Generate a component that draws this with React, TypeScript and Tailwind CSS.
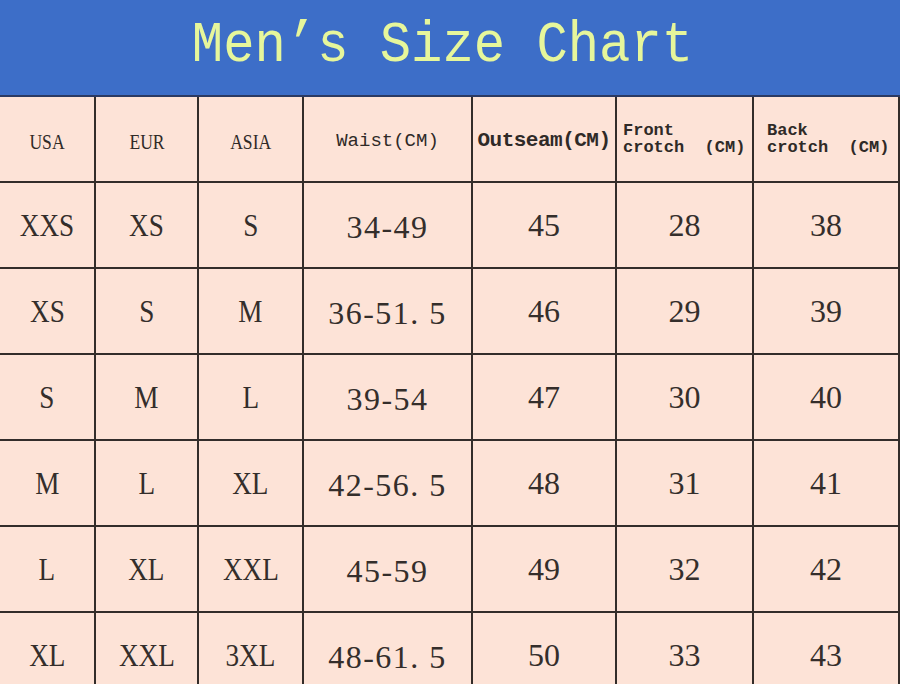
const columns = ["w-[96px]", "w-[103px]", "w-[105px]", "w-[169px]", "w-[144px]", "w-[137px]", "w-[146px]"];

const rows = [
  ["XXS", "XS", "S", "34-49", "45", "28", "38"],
  ["XS", "S", "M", "36-51.5", "46", "29", "39"],
  ["S", "M", "L", "39-54", "47", "30", "40"],
  ["M", "L", "XL", "42-56.5", "48", "31", "41"],
  ["L", "XL", "XXL", "45-59", "49", "32", "42"],
  ["XL", "XXL", "3XL", "48-61.5", "50", "33", "43"],
];

const cell = "shrink-0 h-full border-r-2 border-[#332d2a] flex items-center justify-center";

function HeaderRow() {
  const mono = { fontFamily: '"Liberation Mono", "DejaVu Sans Mono", monospace' };
  return (
    <div className="flex h-[86px] shrink-0 border-b-2 border-[#332d2a] text-[#2f2a27]">
      <div className={`${cell} ${columns[0]} text-[22px] pt-1`}>
        <span className="inline-block scale-x-[0.8]">USA</span>
      </div>
      <div className={`${cell} ${columns[1]} text-[22px] pt-1`}>
        <span className="inline-block scale-x-[0.8]">EUR</span>
      </div>
      <div className={`${cell} ${columns[2]} text-[22px] pt-1`}>
        <span className="inline-block scale-x-[0.8]">ASIA</span>
      </div>
      <div className={`${cell} ${columns[3]} text-[19px] pt-1`} style={mono}>
        Waist(CM)
      </div>
      <div className={`${cell} ${columns[4]} text-[21px] font-bold tracking-[-0.5px] pt-1`} style={mono}>
        Outseam(CM)
      </div>
      <div className={`${cell} ${columns[5]} justify-start! pl-[6px] text-[17px] leading-[17px] font-bold`} style={mono}>
        <div className="whitespace-pre">{"Front\ncrotch  (CM)"}</div>
      </div>
      <div className={`${cell} ${columns[6]} justify-start! pl-[13px] text-[17px] leading-[17px] font-bold`} style={mono}>
        <div className="whitespace-pre">{"Back\ncrotch  (CM)"}</div>
      </div>
    </div>
  );
}

function DataRow({ values }: { values: string[] }) {
  return (
    <div className="flex h-[86px] shrink-0 border-b-2 border-[#332d2a] text-[#342e2b] text-[32px]">
      {values.map((v, i) => (
        <div key={i} className={`${cell} ${columns[i]}`}>
          {i < 3 ? (
            <span className="inline-block scale-x-[0.85]">{v}</span>
          ) : i === 3 ? (
            <span className="tracking-[1.5px] pt-1">{v.replace(".", ". ")}</span>
          ) : (
            <span>{v}</span>
          )}
        </div>
      ))}
    </div>
  );
}

export default function App() {
  return (
    <div
      className="w-[900px] h-[684px] overflow-hidden bg-[#fde3d7] flex flex-col"
      style={{ fontFamily: '"Liberation Serif", "DejaVu Serif", serif' }}
    >
      {/* Title */}
      <div className="h-[97px] shrink-0 bg-[#3d6ec8] border-b-2 border-[#2b3a63] flex items-center justify-center pr-[16px]">
        <h1
          className="inline-block scale-x-[0.9] text-[58px] leading-none text-[#e6f69b] -mt-1"
          style={{ fontFamily: '"Liberation Mono", monospace' }}
        >
          Men’s Size Chart
        </h1>
      </div>

      {/* Table */}
      <HeaderRow />
      {rows.map((r, i) => (
        <DataRow key={i} values={r} />
      ))}
    </div>
  );
}
